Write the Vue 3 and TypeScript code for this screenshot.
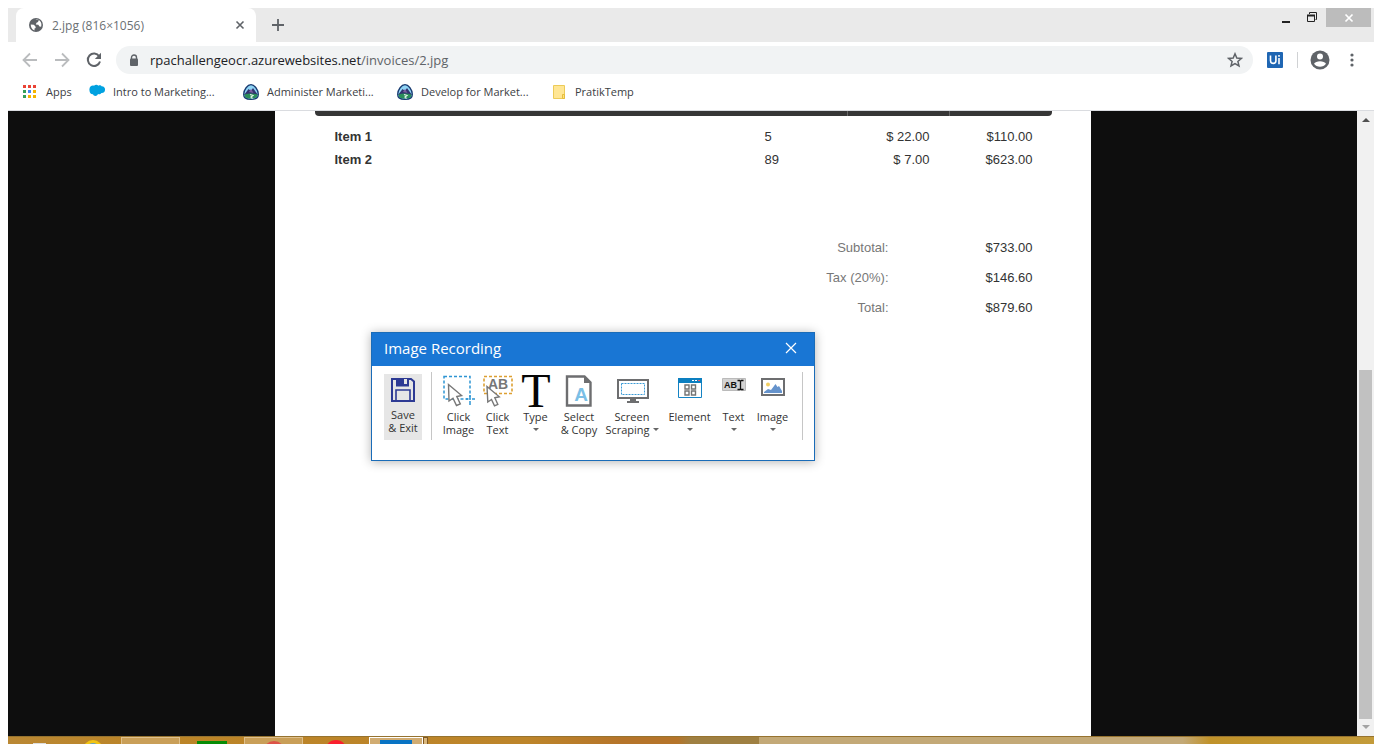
<script setup lang="ts">
interface Bookmark {
  label: string
  icon: 'cloud' | 'trail' | 'folder'
}

interface InvoiceItem {
  name: string
  quantity: number
  price: string
  amount: string
}

interface Tool {
  id: string
  lines: string[]
  menu: 'none' | 'below' | 'inline'
}

const bookmarks: Bookmark[] = [
  { label: 'Intro to Marketing...', icon: 'cloud' },
  { label: 'Administer Marketi...', icon: 'trail' },
  { label: 'Develop for Market...', icon: 'trail' },
  { label: 'PratikTemp', icon: 'folder' },
]

const items: InvoiceItem[] = [
  { name: 'Item 1', quantity: 5, price: '$ 22.00', amount: '$110.00' },
  { name: 'Item 2', quantity: 89, price: '$ 7.00', amount: '$623.00' },
]

const totals = [
  { label: 'Subtotal:', value: '$733.00' },
  { label: 'Tax (20%):', value: '$146.60' },
  { label: 'Total:', value: '$879.60' },
]

const tools: Tool[] = [
  { id: 'click-image', lines: ['Click', 'Image'], menu: 'none' },
  { id: 'click-text', lines: ['Click', 'Text'], menu: 'none' },
  { id: 'type', lines: ['Type'], menu: 'below' },
  { id: 'copy', lines: ['Select', '& Copy'], menu: 'none' },
  { id: 'screen', lines: ['Screen', 'Scraping'], menu: 'inline' },
  { id: 'element', lines: ['Element'], menu: 'below' },
  { id: 'text', lines: ['Text'], menu: 'below' },
  { id: 'image', lines: ['Image'], menu: 'below' },
]

const appColors = ['#ea4335', '#ea4335', '#ea4335', '#34a05a', '#4285f4', '#f4b400', '#34a05a', '#f4b400', '#f4b400']
</script>

<template>
  <div class="desktop">
    <header class="browser">
      <div class="tabstrip">
        <div class="tab">
          <svg class="globe" viewBox="0 0 14 14" aria-hidden="true">
            <circle cx="7" cy="7" r="7" fill="#5f6368" />
            <path d="M1.800 6.500l3 .3 1.700 1.700.2 1.500-1.200.5v2C3 11.500 1.500 9 1.800 6.500zM6.500 1.800l3.300.3-.8 2-1.500.6L6.800 6.500l2.500.3 1.200 1.700 1.600.3c.8-2.300.2-4.700-1.300-6-1.300-1.200-3-1.500-4.300-1z" fill="#fff" />
          </svg>
          <span class="tab-title">2.jpg (816×1056)</span>
          <button class="plain tab-close" aria-label="Close tab">
            <svg viewBox="0 0 10 10"><path d="M1.500 1.500l7 7M8.500 1.500l-7 7" stroke="#5f6368" stroke-width="1.600" /></svg>
          </button>
        </div>
        <button class="plain new-tab" aria-label="New tab">
          <svg viewBox="0 0 12 12"><path d="M6 0v12M0 6h12" stroke="#5f6368" stroke-width="1.800" /></svg>
        </button>
        <div class="window-controls">
          <button class="plain control" aria-label="Minimize">
            <svg viewBox="0 0 12 12"><path d="M1 9h8v2H1z" fill="#222" /></svg>
          </button>
          <button class="plain control" aria-label="Restore">
            <svg viewBox="0 0 12 12" fill="none" stroke="#222">
              <path d="M2.500 2V.5h7v7H8.500M.5 3.500h7v6h-7z" />
              <path d="M0 3.500h8" stroke-width="2" />
            </svg>
          </button>
          <button class="plain control control-close" aria-label="Close">
            <svg viewBox="0 0 12 12"><path d="M2.500 2.500l7 7M9.500 2.500l-7 7" stroke="#fff" stroke-width="1.700" /></svg>
          </button>
        </div>
      </div>

      <div class="toolbar">
        <button class="plain nav" aria-label="Back">
          <svg viewBox="0 0 16 16"><path d="M15 8H2M8 1.500L1.500 8 8 14.500" fill="none" stroke="#babcbe" stroke-width="1.800" /></svg>
        </button>
        <button class="plain nav" aria-label="Forward">
          <svg viewBox="0 0 16 16"><path d="M1 8h13M8 1.500L14.500 8 8 14.500" fill="none" stroke="#babcbe" stroke-width="1.800" /></svg>
        </button>
        <button class="plain nav" aria-label="Reload">
          <svg viewBox="0 0 16 16">
            <path d="M13.200 4.300A6.200 6.200 0 1 0 14 9.500" fill="none" stroke="#5f6368" stroke-width="2" />
            <path d="M15 .8V7H8.800z" fill="#5f6368" />
          </svg>
        </button>
        <div class="omnibox">
          <svg class="lock" viewBox="0 0 10 12" aria-hidden="true">
            <path d="M2.500 5V3.500a2.500 2.500 0 0 1 5 0V5" fill="none" stroke="#5f6368" stroke-width="1.400" />
            <rect x="1" y="4.500" width="8" height="7.500" rx="1" fill="#5f6368" />
          </svg>
          <a class="url" href="#">rpachallengeocr.azurewebsites.net<span class="path">/invoices/2.jpg</span></a>
          <button class="plain star" aria-label="Bookmark this page">
            <svg viewBox="0 0 16 16"><path d="M8 1.800l1.800 4.200 4.600.4-3.500 3 1.100 4.500L8 11.500l-4 2.400 1.100-4.500-3.500-3 4.600-.4z" fill="none" stroke="#5f6368" stroke-width="1.500" /></svg>
          </button>
        </div>
        <button class="plain extension" aria-label="UiPath extension">
          <svg viewBox="0 0 16 16">
            <rect width="16" height="16" rx="1" fill="#1f66b3" />
            <path d="M3.500 3.500v5.200a2.700 2.700 0 0 0 5.400 0V3.500M12 6v6.300M12 3v1.800" fill="none" stroke="#fff" stroke-width="1.600" />
          </svg>
        </button>
        <span class="toolbar-divider"></span>
        <button class="plain profile" aria-label="Profile">
          <svg viewBox="0 0 20 20">
            <circle cx="10" cy="10" r="9.500" fill="#5f6368" />
            <circle cx="10" cy="6.500" r="3" fill="#fff" />
            <path d="M4 13.800c1.500-3.400 10.500-3.400 12 0-2.500 4-9.500 4-12 0z" fill="#fff" />
          </svg>
        </button>
        <button class="plain more" aria-label="Menu">
          <svg viewBox="0 0 4 14" fill="#5f6368"><circle cx="2" cy="2" r="1.600" /><circle cx="2" cy="7" r="1.600" /><circle cx="2" cy="12" r="1.600" /></svg>
        </button>
      </div>

      <nav class="bookmarks">
        <a class="bookmark apps" href="#">
          <svg class="apps-icon" viewBox="0 0 13 13" aria-hidden="true">
            <rect v-for="(color, i) in appColors" :key="i" :x="(i % 3) * 5" :y="Math.floor(i / 3) * 5" width="3" height="3" :fill="color" />
          </svg>
          <span>Apps</span>
        </a>
        <a v-for="bookmark in bookmarks" :key="bookmark.label" class="bookmark" href="#">
          <svg v-if="bookmark.icon === 'cloud'" viewBox="0 0 16 16" aria-hidden="true">
            <path d="M.5 6.500C-.2 3 2.500 1 5 1.700 6.300.3 8.500.5 9.300 1.700c1.500-.9 2.800-.3 3.200.5C15 2 16.300 4 16 6c0 2.300-1.800 3.200-3.600 3-.9 1.500-2.300 1.500-3.400 1-.8 2.500-4.300 2.400-5 .3C2 10.500.5 8.800.5 6.500z" fill="#00a1e0" />
          </svg>
          <svg v-else-if="bookmark.icon === 'trail'" viewBox="0 0 16 16" aria-hidden="true">
            <path d="M8 .7c3.500 0 7.200 5 7.300 9.500.1 3-1.500 5.100-7.300 5.100S.6 13.200.7 10.200C.8 5.700 4.500.7 8 .7z" fill="#8fd4f5" stroke="#173a70" stroke-width="1.300" />
            <path d="M1 11l4.500-6L8 7l2-3 5 7z" fill="#32336f" />
            <path d="M6 8l2-3 2.500 4z" fill="#7b5b9d" />
            <path d="M1.500 10.500q6-2 13 0c0 3-2 4-6.500 4s-6.500-1-6.500-4z" fill="#2a8d59" />
            <path d="M7 10.500l3 1-2 1.500 1.500 1.500" fill="none" stroke="#e7f5ec" stroke-width="1.200" />
          </svg>
          <svg v-else viewBox="0 0 16 16" aria-hidden="true">
            <path d="M2.500 1.500h11v13h-11z" fill="#ffe694" stroke="#eccb58" />
            <path d="M11.500 14.500v-4h2v4z" fill="#ffe27a" stroke="#e6bd3c" />
          </svg>
          <span>{{ bookmark.label }}</span>
        </a>
      </nav>
    </header>

    <main class="viewport">
      <div class="canvas">
        <article class="paper">
          <table class="items">
            <colgroup>
              <col />
              <col class="col-quantity" />
              <col class="col-price" />
              <col class="col-amount" />
            </colgroup>
            <thead>
              <tr><th></th><th></th><th></th><th></th></tr>
            </thead>
            <tbody>
              <tr v-for="item in items" :key="item.name">
                <th scope="row">{{ item.name }}</th>
                <td>{{ item.quantity }}</td>
                <td class="money">{{ item.price }}</td>
                <td class="money">{{ item.amount }}</td>
              </tr>
            </tbody>
          </table>
          <dl class="totals">
            <div v-for="total in totals" :key="total.label" class="total">
              <dt>{{ total.label }}</dt>
              <dd>{{ total.value }}</dd>
            </div>
          </dl>
        </article>
      </div>
      <div class="scrollbar" aria-hidden="true">
        <svg class="arrow" viewBox="0 0 17 17"><path d="M5 11h8L9 7z" fill="#505050" /></svg>
        <div class="track"><div class="thumb"></div></div>
        <svg class="arrow" viewBox="0 0 17 17"><path d="M5 6h8l-4 4z" fill="#a3a3a3" /></svg>
      </div>

      <section class="dialog" role="dialog" aria-labelledby="dialog-title">
        <header class="dialog-header">
          <h1 id="dialog-title">Image Recording</h1>
          <button class="plain dialog-close" aria-label="Close dialog">
            <svg viewBox="0 0 12 12"><path d="M1 1l10 10M11 1L1 11" stroke="#fff" stroke-width="1.200" /></svg>
          </button>
        </header>
        <div class="dialog-body">
          <button class="plain save">
            <svg viewBox="0 0 38 34" fill="none" stroke="#2d3a94" stroke-width="2" aria-hidden="true">
              <path d="M8 5h19l3 2.500V27H8z" />
              <path d="M12 4h13v8.500H12z" fill="#2d3a94" stroke="none" />
              <path d="M20 5h3v5h-3z" fill="#e6e6e6" stroke="none" />
              <path d="M12 27V16h14v11" stroke-width="1.600" />
            </svg>
            <span>Save</span>
            <span>&amp; Exit</span>
          </button>
          <span class="separator"></span>
          <div class="tools">
            <button v-for="tool in tools" :key="tool.id" class="plain tool">
              <svg v-if="tool.id === 'click-image'" viewBox="0 0 40 36" width="40" fill="none" aria-hidden="true">
                <path d="M5 2.500h26V25H5z" stroke="#2e95d3" stroke-width="1.500" stroke-dasharray="3 2" />
                <path d="M27 25h2M30 25h2M33 25h3M31 21v2M31 27v4" stroke="#2e95d3" stroke-width="1.500" />
                <path d="M9.500 10.500l.5 16.500 4-2.800 3.500 7.300 3.800-1.600-3.500-7.400 4.800-1z" fill="#fff" stroke="#777" stroke-width="1.400" />
              </svg>
              <svg v-else-if="tool.id === 'click-text'" viewBox="0 0 38 36" width="38" fill="none" aria-hidden="true">
                <path d="M5 2.500h28v17H5z" stroke="#dda032" stroke-width="1.600" stroke-dasharray="3 2" />
                <text class="glyph-bold" x="9" y="15" font-size="14" fill="#777">AB</text>
                <path d="M8 12.500l.8 15.500 3.700-2.500 3 6.300 3.300-1.500-3-6.500 4.500-1z" fill="#fff" stroke="#777" stroke-width="1.400" />
              </svg>
              <svg v-else-if="tool.id === 'type'" viewBox="0 0 38 36" width="38" aria-hidden="true">
                <text class="glyph-serif" x="19" y="33" font-size="48" text-anchor="middle" fill="#050505">T</text>
              </svg>
              <svg v-else-if="tool.id === 'copy'" viewBox="0 0 38 36" width="38" aria-hidden="true">
                <path d="M7 2.500h17.500l6 6V31.500H7z" fill="#fff" stroke="#6d6e70" stroke-width="2.400" />
                <path d="M24 2v7h7z" fill="#6d6e70" />
                <text class="glyph-bold" x="21" y="27" font-size="19" text-anchor="middle" fill="#7bbfe6">A</text>
              </svg>
              <svg v-else-if="tool.id === 'screen'" viewBox="0 0 38 36" width="38" fill="none" aria-hidden="true">
                <path d="M5 6h30v18H5z" stroke="#6d6e70" stroke-width="2" />
                <path d="M17 24h6v3h3v2H14v-2h3z" fill="#6d6e70" />
                <path d="M8.500 9.500h23v11h-23z" stroke="#3a9bd6" stroke-dasharray="2 1" />
              </svg>
              <svg v-else-if="tool.id === 'element'" viewBox="0 0 38 36" width="38" fill="none" aria-hidden="true">
                <path d="M7.500 4.500h23v19h-23z" fill="#fff" stroke="#1583c4" />
                <path d="M7 4h24v5H7z" fill="#0c7fc0" />
                <path d="M21 6h2v1h-2zM24 6h2v1h-2z" fill="#fff" />
                <path d="M27 6h2v1h-2z" fill="#ef5a67" />
                <path d="M14 11h4v4h-4zM20.500 11h4v4h-4zM14 17h4v4h-4zM20.500 17h4v4h-4z" stroke="#737373" stroke-width="1.400" />
              </svg>
              <svg v-else-if="tool.id === 'text'" viewBox="0 0 30 36" width="30" fill="none" aria-hidden="true">
                <path d="M3.500 4.500h23v12h-23z" fill="#d3d3d3" stroke="#bababa" />
                <text class="glyph-bold" x="5" y="14" font-size="9" fill="#111">AB</text>
                <path d="M18.500 6.500h2l1 .8 1-.8h2M21.500 7v8M18.500 15.500h2l1-.8 1 .8h2" stroke="#111" stroke-width="1.300" />
              </svg>
              <svg v-else viewBox="0 0 38 36" width="38" fill="none" aria-hidden="true">
                <path d="M8 5h22v16H8z" fill="#fff" stroke="#6d6e70" stroke-width="2" />
                <circle cx="14" cy="10.500" r="2" fill="#f2cf63" />
                <path d="M10 19v-1l4-3 3 1 4.500-6 2 3 1.500-1 3 5v2z" fill="#6593cc" />
              </svg>
              <span v-for="(line, i) in tool.lines" :key="line">{{ line }}<svg v-if="tool.menu === 'inline' && i === tool.lines.length - 1" class="caret caret-inline" viewBox="0 0 6 3" aria-hidden="true"><path d="M0 0h6L3 3z" /></svg></span>
              <span v-if="tool.menu === 'below'"><svg class="caret" viewBox="0 0 6 3" aria-hidden="true"><path d="M0 0h6L3 3z" /></svg></span>
            </button>
          </div>
          <span class="separator separator-end"></span>
        </div>
      </section>
    </main>

    <footer class="taskbar">
      <span class="task pen"></span>
      <span class="task explorer"></span>
      <span class="task window-button"></span>
      <span class="task green"></span>
      <span class="task window-button"><i class="dot muted"></i></span>
      <span class="task red"><i class="dot"></i></span>
      <span class="task window-button active"><i class="blue"></i></span>
      <span class="task stack"></span>
    </footer>
  </div>
</template>

<style>
body {
  margin: 0;
  background: #fff;
}
</style>

<style scoped>
.desktop {
  box-sizing: border-box;
  display: flex;
  flex-direction: column;
  height: 100vh;
  padding: 8px 8px 0;
  overflow: hidden;
  font-family: 'Open Sans', 'Noto Sans', sans-serif;
  font-size: 11px;
  color: #3c4043;
}

.plain {
  display: flex;
  align-items: center;
  justify-content: center;
  padding: 0;
  border: 0;
  background: none;
  font: inherit;
  color: inherit;
}

svg {
  display: block;
}

a {
  color: inherit;
  text-decoration: none;
}

.tabstrip {
  display: flex;
  height: 34px;
  padding-left: 8px;
  background: #eaeaea;
}

.tab {
  box-sizing: border-box;
  display: flex;
  align-items: center;
  width: 240px;
  padding: 0 11px 0 13px;
  border-radius: 8px 8px 0 0;
  background: #fff;
}

.globe {
  width: 14px;
  height: 14px;
}

.tab-title {
  flex: 1;
  margin-left: 9px;
  font-size: 12px;
  color: #6b6f73;
}

.tab-close,
.tab-close svg {
  width: 10px;
  height: 10px;
}

.new-tab {
  width: 44px;
}

.new-tab svg {
  width: 12px;
  height: 12px;
}

.window-controls {
  display: flex;
  margin-left: auto;
  padding-right: 3px;
}

.control {
  width: 26px;
  height: 19px;
}

.control svg {
  width: 12px;
  height: 12px;
}

.control-close {
  width: 45px;
  background: #bcbcbc;
}

.toolbar {
  display: flex;
  align-items: center;
  height: 36px;
  padding: 0 14px;
}

.nav {
  width: 16px;
  height: 16px;
  margin-right: 16px;
}

.nav svg,
.star svg,
.extension svg {
  width: 16px;
  height: 16px;
}

.omnibox {
  box-sizing: border-box;
  display: flex;
  flex: 1;
  align-items: center;
  height: 28px;
  margin-left: -2px;
  padding: 0 10px 0 13px;
  border-radius: 14px;
  background: #f1f3f4;
}

.lock {
  width: 10px;
  height: 12px;
}

.url {
  flex: 1;
  margin-left: 11px;
  font-size: 13px;
  color: #202124;
}

.path {
  color: #5f6368;
}

.extension {
  margin-left: 14px;
}

.toolbar-divider {
  width: 1px;
  height: 16px;
  margin: 0 12px 0 14px;
  background: #d0d2d4;
}

.profile svg {
  width: 20px;
  height: 20px;
}

.more {
  width: 4px;
  margin: 0 6px 0 20px;
}

.more svg {
  width: 4px;
  height: 14px;
}

.bookmarks {
  display: flex;
  height: 32px;
  padding-left: 15px;
  border-bottom: 1px solid #dadce0;
}

.bookmark {
  display: flex;
  align-items: center;
  gap: 8px;
  width: 154px;
  height: 27px;
}

.bookmark svg {
  width: 16px;
  height: 16px;
}

.apps {
  gap: 10px;
  width: 66px;
}

.bookmark .apps-icon {
  width: 13px;
  height: 13px;
}

.viewport {
  position: relative;
  display: flex;
  flex: 1;
  min-height: 0;
}

.canvas {
  display: flex;
  flex: 1;
  justify-content: center;
  background: #0e0e0e;
}

.paper {
  box-sizing: border-box;
  width: 816px;
  padding: 0 39px 0 40px;
  background: #fff;
  font-family: 'Liberation Sans', Arial, sans-serif;
  font-size: 13px;
  color: #333;
}

.items {
  width: 100%;
  table-layout: fixed;
  border-spacing: 0;
}

.col-quantity {
  width: 82px;
}

.col-price {
  width: 102px;
}

.col-amount {
  width: 103px;
}

.items thead th {
  height: 5px;
  padding: 0;
  background: #363636;
}

.items thead th:nth-child(n + 3) {
  border-left: 1px solid #666;
}

.items thead th:first-child {
  border-bottom-left-radius: 4px;
}

.items thead th:last-child {
  border-bottom-right-radius: 4px;
}

.items tbody th,
.items tbody td {
  height: 23px;
  padding: 0;
  text-align: left;
}

.items tbody tr:first-child > * {
  padding-top: 9px;
}

.items tbody th {
  padding-left: 20px;
}

.items tbody .money {
  padding-right: 19px;
  text-align: right;
}

.totals {
  margin: 62px 19px 0 0;
}

.total {
  display: grid;
  grid-template-columns: 1fr 144px;
  line-height: 30px;
  text-align: right;
}

.total dt {
  color: #777;
}

.total dd {
  margin: 0;
}

.scrollbar {
  display: flex;
  flex-direction: column;
  width: 17px;
  background: #f1f1f1;
}

.arrow {
  width: 17px;
  height: 17px;
}

.track {
  display: flex;
  flex: 1;
  flex-direction: column;
  justify-content: flex-end;
  padding: 0 2px;
}

.thumb {
  height: 59%;
  background: #c1c1c1;
}

.dialog {
  position: absolute;
  top: 221px;
  left: 363px;
  box-sizing: border-box;
  width: 444px;
  border: 1px solid #1a6cb8;
  background: #fff;
  box-shadow: 0 1px 10px rgba(0, 0, 0, 0.3);
  color: #333;
}

.dialog-header {
  box-sizing: border-box;
  display: flex;
  align-items: center;
  justify-content: space-between;
  height: 33px;
  padding: 0 17px 3px 12px;
  background: #1976d4;
  color: #fff;
}

.dialog-header h1 {
  margin: 0;
  font-size: 15px;
  font-weight: 400;
}

.dialog-close svg {
  width: 12px;
  height: 12px;
}

.dialog-body {
  display: flex;
  padding: 6px 12px 20px;
  line-height: 13px;
}

.save,
.tool {
  flex-direction: column;
  justify-content: flex-start;
  white-space: nowrap;
}

.save {
  width: 38px;
  height: 66px;
  margin-top: 2px;
  background: #e6e6e6;
}

.save svg {
  width: 38px;
  height: 34px;
}

.save span,
.tool span {
  display: flex;
  align-items: center;
  justify-content: center;
  height: 13px;
}

.separator {
  width: 1px;
  height: 68px;
  margin: 0 7px 0 9px;
  background: #c6c6c6;
}

.separator-end {
  margin: 0 0 0 5px;
}

.tools {
  display: grid;
  grid-template-columns: 40px 38px 38px 49px 57px 58px 30px 48px;
  padding-top: 2px;
}

.tool > svg {
  height: 36px;
  overflow: visible;
}

.caret {
  width: 6px;
  height: 3px;
  fill: #666;
}

.caret-inline {
  margin-left: 3px;
}

.glyph-bold {
  font-family: 'Liberation Sans', Arial, sans-serif;
  font-weight: 700;
}

.glyph-serif {
  font-family: 'Liberation Serif', serif;
}

.taskbar {
  box-sizing: border-box;
  display: flex;
  flex: none;
  height: 8px;
  padding-left: 25px;
  border-top: 1px solid #96732f;
  overflow: hidden;
  background: linear-gradient(90deg, #ba8834 0, #bb8427 10%, #bd852a 38%, #b5742a 45%, #b5742a 49%, #9f8042 50%, #9f8042 55%, #c3a977 55%, #c3a977 86%, #c0922a 88%, #c39b3a 100%);
}

.task {
  flex: none;
}

.pen {
  width: 13px;
  height: 2px;
  margin-top: 6px;
  background: #ddd;
}

.explorer {
  box-sizing: border-box;
  width: 20px;
  height: 20px;
  margin: 3px 18px 0 37px;
  border: 3px solid #f2c413;
  border-radius: 50%;
  background: #64a2c4;
}

.window-button {
  box-sizing: border-box;
  display: flex;
  justify-content: center;
  width: 59px;
  height: 20px;
  border: 1px solid #dfc08c;
  background: #c99f58;
}

.green {
  width: 30px;
  height: 20px;
  margin: 4px 17px 0;
  background: #068c06;
}

.dot {
  width: 22px;
  height: 22px;
  margin-top: 3px;
  border-radius: 50%;
  background: #fa1e2d;
}

.dot.muted {
  background: #dd5348;
}

.red {
  display: flex;
  margin: 0 22px;
}

.active {
  width: 54px;
  border-color: #fff;
  background: #d1ac72;
}

.blue {
  width: 32px;
  height: 12px;
  margin-top: 2px;
  background: #0873c4;
}

.stack {
  box-sizing: border-box;
  width: 5px;
  border: 1px solid #805923;
  border-bottom: 0;
  background: #d9b77d;
}
</style>
